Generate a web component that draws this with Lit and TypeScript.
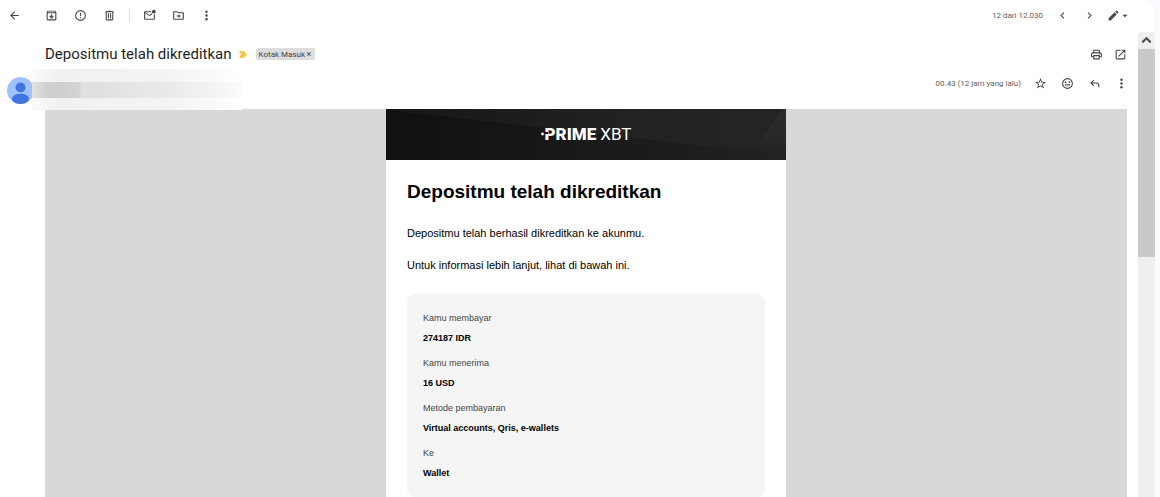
import { LitElement, html, css, svg } from "lit";
import { customElement, property } from "lit/decorators.js";

const icons: Record<string, unknown> = {
  back: svg`<path d="M20 11H7.83l5.59-5.59L12 4l-8 8 8 8 1.41-1.41L7.83 13H20v-2z"/>`,
  archive: svg`<path d="M5 3h14l2 3v13a2 2 0 0 1-2 2H5a2 2 0 0 1-2-2V6l2-3zm.9 1.500-.7 1.500h13.600l-.7-1.500H5.900zM5 8v11h14V8H5zm5.500 2h3v3.500H16.500L12 17.800 7.500 13.500h3V10z"/>`,
  report: svg`<path d="M11 7h2v6h-2zm0 8h2v2h-2zm1-13a10 10 0 1 0 0 20 10 10 0 0 0 0-20zm0 18a8 8 0 1 1 0-16 8 8 0 0 1 0 16z"/>`,
  trash: svg`<path d="M15 4V3H9v1H4v2h1v13a2 2 0 0 0 2 2h10a2 2 0 0 0 2-2V6h1V4h-5zm2 15H7V6h10v13zM9 8h2v9H9zm4 0h2v9h-2z"/>`,
  unread: svg`<path d="M20 10.500V18H4V8l8 5 5.500-3.400a5 5 0 0 1-1.500-1.600L12 11 4 6h11.100a5 5 0 0 1 0-2H4a2 2 0 0 0-2 2v12a2 2 0 0 0 2 2h16a2 2 0 0 0 2-2V9.500a5 5 0 0 1-2 .5z"/><circle cx="20" cy="5" r="3.500"/>`,
  move: svg`<path d="M20 6h-8l-2-2H4a2 2 0 0 0-2 2v12a2 2 0 0 0 2 2h16a2 2 0 0 0 2-2V8a2 2 0 0 0-2-2zm0 12H4V6h5.200l2 2H20v10zm-8-6H8.500v2H12v2.500l4-3.500-4-3.500V12z"/>`,
  more: svg`<circle cx="12" cy="5" r="2.200"/><circle cx="12" cy="12" r="2.200"/><circle cx="12" cy="19" r="2.200"/>`,
  prev: svg`<path d="M15.400 7.400 14 6l-6 6 6 6 1.400-1.400L10.800 12z"/>`,
  next: svg`<path d="M10 6 8.600 7.400l4.600 4.600-4.600 4.600L10 18l6-6z"/>`,
  pencil: svg`<path d="M3 17.250V21h3.750L17.810 9.940l-3.750-3.750L3 17.250zM20.710 7.040a1 1 0 0 0 0-1.410l-2.340-2.340a1 1 0 0 0-1.410 0l-1.830 1.830 3.750 3.750 1.830-1.830z"/>`,
  caret: svg`<path d="M4 8h16l-8 8z"/>`,
  print: svg`<path d="M19 8h-1V3H6v5H5a3 3 0 0 0-3 3v6h4v4h12v-4h4v-6a3 3 0 0 0-3-3zM8 5h8v3H8V5zm8 14H8v-4h8v4zm4-4h-2v-2H6v2H4v-4a1 1 0 0 1 1-1h14a1 1 0 0 1 1 1v4z"/><circle cx="18" cy="11.500" r="1"/>`,
  open: svg`<path d="M19 19H5V5h7V3H5a2 2 0 0 0-2 2v14a2 2 0 0 0 2 2h14a2 2 0 0 0 2-2v-7h-2v7zM14 3v2h3.590l-9.830 9.830 1.410 1.410L19 6.410V10h2V3h-7z"/>`,
  star: svg`<path d="m22 9.240-7.190-.62L12 2 9.190 8.630 2 9.240l5.460 4.730L5.820 21 12 17.270 18.180 21l-1.630-7.030L22 9.240zM12 15.400l-3.760 2.270 1-4.280-3.320-2.880 4.380-.38L12 6.100l1.710 4.040 4.380.38-3.320 2.880 1 4.280L12 15.400z"/>`,
  smile: svg`<path d="M12 2a10 10 0 1 0 0 20 10 10 0 0 0 0-20zm0 18a8 8 0 1 1 0-16 8 8 0 0 1 0 16z"/><circle cx="8.500" cy="9.500" r="1.600"/><circle cx="15.500" cy="9.500" r="1.600"/><path d="M6.500 13.500h11a5.800 5.800 0 0 1-11 0zm2.600 1.500a3.700 3.700 0 0 0 5.800 0z"/>`,
  reply: svg`<path d="M7.830 10H15a6 6 0 0 1 6 6v3h-2v-3a4 4 0 0 0-4-4H7.830l3.580 3.590L10 17l-6-6 6-6 1.410 1.410z"/>`,
  up: svg`<path d="M12 5 21 14 18.500 17 12 10.500 5.500 17 3 14z"/>`,
};

@customElement("icon-glyph")
class IconGlyph extends LitElement {
  static styles = css`
    :host { display: inline-flex; width: 13px; height: 13px; }
    svg { width: 100%; height: 100%; fill: currentColor; }
  `;
  @property() name = "";
  render() {
    return html`<svg viewBox="0 0 24 24" aria-hidden="true">${icons[this.name]}</svg>`;
  }
}

const payment = [
  ["Kamu membayar", "274187 IDR"],
  ["Kamu menerima", "16 USD"],
  ["Metode pembayaran", "Virtual accounts, Qris, e-wallets"],
  ["Ke", "Wallet"],
];

@customElement("deposit-mail")
class DepositMail extends LitElement {
  static styles = css`
    :host {
      display: block;
      width: 100%;
      max-width: 400px;
      background: #fff;
      color: #000;
      font-family: "Liberation Sans", Arial, sans-serif;
    }
    .banner { display: grid; height: 51px; background: #171717; }
    .backdrop, .brand { grid-area: 1 / 1; }
    .backdrop { width: 100%; height: 51px; }
    .brand {
      display: flex;
      align-items: center;
      justify-content: center;
      gap: 4px;
      padding: 0 0 2px 4px;
      color: #fff;
      font: 17px/20px Roboto, sans-serif;
    }
    .prime { position: relative; font-weight: 900; }
    .notch { position: absolute; left: -4px; top: 0; width: 10px; height: 20px; }
    .xbt { font-weight: 400; }
    .content { padding: 20px 21px 0; }
    h1 { margin: 0 0 21px; font-size: 19px; line-height: 24px; }
    p { margin: 0 0 16px; font-size: 11px; line-height: 16px; }
    .details {
      display: grid;
      gap: 5px;
      margin: 21px 0 0;
      padding: 14px 16px;
      border-radius: 8px;
      background: #f5f5f5;
      font-size: 9px;
      line-height: 20px;
    }
    dt { color: #444; }
    dd { margin: 0; font-weight: 700; }
  `;
  render() {
    return html`
      <header class="banner">
        <svg class="backdrop" viewBox="0 0 400 51" preserveAspectRatio="none" aria-hidden="true">
          <defs>
            <linearGradient id="shade"><stop stop-color="#101010"/><stop offset="1" stop-color="#222"/></linearGradient>
            <linearGradient id="sheen"><stop stop-color="#161616"/><stop offset="0.6" stop-color="#222"/><stop offset="1" stop-color="#242424"/></linearGradient>
            <linearGradient id="facet" x2="0" y2="1"><stop stop-color="#2c2c2c"/><stop offset="1" stop-color="#272727"/></linearGradient>
          </defs>
          <rect width="400" height="51" fill="url(#shade)"/>
          <path d="M0 0H400V42L340 39 0 1z" fill="url(#sheen)"/>
          <path d="M397 0h3v38l-29-1z" fill="url(#facet)"/>
        </svg>
        <div class="brand">
          <span class="prime">PRIME<svg class="notch" viewBox="0 0 10 20" aria-hidden="true">
            <path d="M3 8h4v2H3z" fill="#181818"/><circle cx="1.500" cy="10" r="1.400" fill="#fff"/>
          </svg></span>
          <span class="xbt">XBT</span>
        </div>
      </header>
      <div class="content">
        <h1>Depositmu telah dikreditkan</h1>
        <p>Depositmu telah berhasil dikreditkan ke akunmu.</p>
        <p>Untuk informasi lebih lanjut, lihat di bawah ini.</p>
        <dl class="details">
          ${payment.map(([label, value]) => html`<div><dt>${label}</dt><dd>${value}</dd></div>`)}
        </dl>
      </div>
    `;
  }
}

@customElement("app-root")
class AppRoot extends LitElement {
  static styles = css`
    :host {
      display: flex;
      flex-direction: column;
      height: 100vh;
      margin-right: 5px;
      overflow: hidden;
      border-radius: 0 12px 0 0;
      background: #fff;
      box-shadow: 0 0 0 20px #f8fafd;
      color: #444746;
      font-family: Roboto, sans-serif;
      font-size: 8px;
    }
    button {
      display: inline-flex;
      align-items: center;
      justify-content: center;
      flex: none;
      padding: 0;
      border: 0;
      background: none;
      color: inherit;
      font: inherit;
    }
    .tool { width: 29px; height: 31px; }
    .toolbar { display: flex; align-items: center; flex: none; height: 31px; padding-bottom: 1px; }
    .back { margin-right: 8px; }
    .divider { width: 1px; height: 13px; margin: 0 5px; background: #dcdcdc; }
    .count { margin-left: auto; margin-right: 6px; color: #5e5e5e; }
    .nav { width: 27px; height: 31px; }
    .input-tool { gap: 1px; width: 30px; height: 31px; margin-right: 22px; }
    .small { width: 8px; height: 8px; }
    .body { display: flex; flex: 1; min-height: 0; }
    .thread { flex: 1; min-width: 0; overflow: hidden; }
    .subject { display: flex; align-items: center; height: 37px; padding: 7px 6px 0 45px; box-sizing: border-box; }
    h2 { margin: 0 7px 0 0; color: #1f1f1f; font-size: 15px; line-height: 20px; font-weight: 400; }
    .important { width: 8px; height: 7px; margin-right: 9px; fill: #f2c94c; }
    .label {
      display: flex;
      align-items: center;
      gap: 1px;
      height: 12px;
      padding: 0 3px;
      border-radius: 2px;
      background: #ddd;
      color: #444;
    }
    .tag-close { width: 6px; height: 12px; font-size: 9px; }
    .actions { display: flex; align-items: center; margin-left: auto; }
    .action { width: 24px; height: 24px; }
    .sender { display: flex; align-items: center; height: 40px; padding: 0 3px 0 7px; }
    .avatar { flex: none; width: 27px; height: 27px; margin-top: 3px; }
    .redacted {
      display: grid;
      align-content: center;
      align-self: flex-start;
      width: 210px;
      height: 41px;
      margin-left: -2px;
      background: linear-gradient(90deg, #fafafa, #f1f1f1 12%, #f3f3f3 60%, #fafafa 88%, #fff);
      z-index: 1;
    }
    .smear {
      height: 16px;
      background: linear-gradient(90deg, #e4e4e4, #cfcfcf 15px 32px, #d4d4d4 48px, #e0e0e0 49px 68px, #e6e6e6 100px, #eaeaea 140px, #f0f0f0 165px, #f5f5f5 190px, #fcfcfc);
    }
    .meta { display: flex; align-items: center; margin-left: auto; padding-bottom: 11px; }
    .time { margin-right: 6px; color: #5e5e5e; white-space: nowrap; }
    .meta-tool { width: 27px; height: 29px; }
    .canvas { display: flex; justify-content: center; min-height: 388px; margin: 0 11px 0 45px; background: #d8d8d8; }
    .scrollbar { flex: none; width: 17px; background: #efefef; }
    .arrow { display: flex; width: 17px; height: 17px; color: #505050; }
    .thumb { height: 208px; background: #c9c9c9; }
  `;

  tool(name: string, label: string, cls = "tool") {
    return html`<button class=${cls} aria-label=${label}><icon-glyph name=${name}></icon-glyph></button>`;
  }

  render() {
    return html`
      <nav class="toolbar">
        ${this.tool("back", "Kembali", "tool back")}
        ${this.tool("archive", "Arsipkan")} ${this.tool("report", "Laporkan spam")}
        ${this.tool("trash", "Hapus")}
        <span class="divider"></span>
        ${this.tool("unread", "Tandai belum dibaca")} ${this.tool("move", "Pindahkan")}
        ${this.tool("more", "Lainnya", "nav")}
        <span class="count">12 dari 12.030</span>
        ${this.tool("prev", "Lebih baru", "nav")} ${this.tool("next", "Lebih lama", "nav")}
        <button class="input-tool" aria-label="Alat input">
          <icon-glyph name="pencil"></icon-glyph><icon-glyph class="small" name="caret"></icon-glyph>
        </button>
      </nav>
      <div class="body">
        <main class="thread">
          <div class="subject">
            <h2>Depositmu telah dikreditkan</h2>
            <svg class="important" viewBox="0 0 8 7" aria-hidden="true"><path d="M0 0h5l3 3.500L5 7H0l2-3.500z"/></svg>
            <span class="label">Kotak Masuk <button class="tag-close" aria-label="Hapus label">×</button></span>
            <div class="actions">
              ${this.tool("print", "Cetak", "action")} ${this.tool("open", "Buka di jendela baru", "action")}
            </div>
          </div>
          <div class="sender">
            <svg class="avatar" viewBox="0 0 27 27" aria-hidden="true">
              <circle cx="13.500" cy="13.500" r="13.500" fill="#a0c3ff"/>
              <circle cx="13.500" cy="10.500" r="5" fill="#4274e0"/>
              <path d="M5 22c0-7 17-7 17 0 0 2-3 5-8.500 5S5 24 5 22z" fill="#4274e0"/>
            </svg>
            <div class="redacted"><div class="smear"></div></div>
            <div class="meta">
              <span class="time">00.43 (12 jam yang lalu)</span>
              ${this.tool("star", "Beri bintang", "meta-tool")} ${this.tool("smile", "Tambahkan reaksi", "meta-tool")}
              ${this.tool("reply", "Balas", "meta-tool")} ${this.tool("more", "Lainnya", "meta-tool")}
            </div>
          </div>
          <div class="canvas"><deposit-mail></deposit-mail></div>
        </main>
        <div class="scrollbar">
          <button class="arrow" aria-label="Gulir ke atas"><icon-glyph name="up"></icon-glyph></button>
          <div class="thumb"></div>
        </div>
      </div>
    `;
  }
}
